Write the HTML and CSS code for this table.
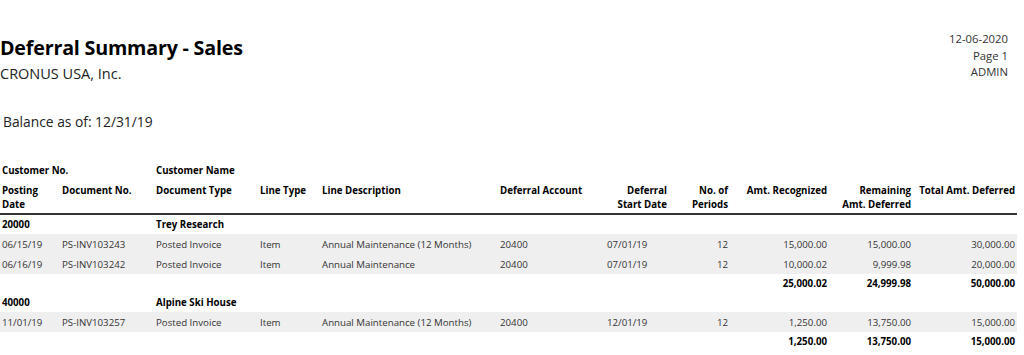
FILE: index.html
```html
<!DOCTYPE html>
<html>
<head>
<meta charset="utf-8">
<link rel="stylesheet" href="styles.css">
</head>
<body>
<div class="page">
  <header class="top">
    <div class="titles">
      <h1 class="title">Deferral Summary - Sales</h1>
      <div class="company">CRONUS USA, Inc.</div>
    </div>
    <div class="meta">
      <div>12-06-2020</div>
      <div>Page 1</div>
      <div>ADMIN</div>
    </div>
  </header>
  <div class="balance">Balance as of: 12/31/19</div>
  <table class="report">
    <colgroup>
      <col class="c1"><col class="c2"><col class="c3"><col class="c4"><col class="c5"><col class="c6"><col class="c7"><col class="c8"><col class="c9"><col class="c10"><col class="c11">
    </colgroup>
    <thead>
      <tr class="h1">
        <th colspan="2">Customer No.</th>
        <th colspan="9">Customer Name</th>
      </tr>
      <tr class="h2">
        <th>Posting<br>Date</th>
        <th>Document No.</th>
        <th>Document Type</th>
        <th>Line Type</th>
        <th>Line Description</th>
        <th>Deferral Account</th>
        <th class="r">Deferral<br>Start Date</th>
        <th class="r">No. of<br>Periods</th>
        <th class="r">Amt. Recognized</th>
        <th class="r">Remaining<br>Amt. Deferred</th>
        <th class="r">Total Amt. Deferred</th>
      </tr>
    </thead>
    <tbody>
      <tr class="group">
        <td colspan="2">20000</td>
        <td colspan="9">Trey Research</td>
      </tr>
      <tr class="line">
        <td>06/15/19</td><td>PS-INV103243</td><td>Posted Invoice</td><td>Item</td><td>Annual Maintenance (12 Months)</td><td>20400</td><td>07/01/19</td><td class="r">12</td><td class="r">15,000.00</td><td class="r">15,000.00</td><td class="r">30,000.00</td>
      </tr>
      <tr class="line">
        <td>06/16/19</td><td>PS-INV103242</td><td>Posted Invoice</td><td>Item</td><td>Annual Maintenance</td><td>20400</td><td>07/01/19</td><td class="r">12</td><td class="r">10,000.02</td><td class="r">9,999.98</td><td class="r">20,000.00</td>
      </tr>
      <tr class="total">
        <td colspan="8"></td><td class="r">25,000.02</td><td class="r">24,999.98</td><td class="r">50,000.00</td>
      </tr>
      <tr class="group">
        <td colspan="2">40000</td>
        <td colspan="9">Alpine Ski House</td>
      </tr>
      <tr class="line">
        <td>11/01/19</td><td>PS-INV103257</td><td>Posted Invoice</td><td>Item</td><td>Annual Maintenance (12 Months)</td><td>20400</td><td>12/01/19</td><td class="r">12</td><td class="r">1,250.00</td><td class="r">13,750.00</td><td class="r">15,000.00</td>
      </tr>
      <tr class="total">
        <td colspan="8"></td><td class="r">1,250.00</td><td class="r">13,750.00</td><td class="r">15,000.00</td>
      </tr>
    </tbody>
  </table>
</div>
</body>
</html>
```

FILE: styles.css
```css
html, body {
  margin: 0;
  padding: 0;
  background: #ffffff;
}
body {
  font-family: "Open Sans", "Noto Sans", "Liberation Sans", sans-serif;
  color: #333333;
}
.page {
  width: 1024px;
}
.top {
  display: flex;
  justify-content: space-between;
  align-items: flex-start;
  padding-top: 31px;
}
.title {
  margin: 4px 0 0 0;
  font-size: 19.7px;
  font-weight: 700;
  line-height: 26px;
  color: #000000;
  letter-spacing: -0.2px;
}
.company {
  font-size: 14.5px;
  line-height: 20px;
  color: #222222;
  margin-top: 3px;
}
.meta {
  text-align: right;
  font-size: 11.3px;
  line-height: 16.5px;
  color: #333333;
  padding-right: 16px;
}
.balance {
  font-size: 13.8px;
  line-height: 20px;
  color: #222222;
  padding-left: 3px;
  margin-top: 28px;
}
.report {
  margin-top: 29px;
  width: 1017px;
  border-collapse: collapse;
  table-layout: fixed;
  font-size: 9.7px;
}
.c1 { width: 60px; }
.c2 { width: 94px; }
.c3 { width: 104px; }
.c4 { width: 62px; }
.c5 { width: 178px; }
.c6 { width: 107px; }
.c7 { width: 64px; }
.c8 { width: 61px; }
.c9 { width: 99px; }
.c10 { width: 84px; }
.c11 { width: 104px; }
.report th,
.report td {
  padding: 0 2px;
  text-align: left;
  white-space: nowrap;
  overflow: visible;
}
.report th {
  font-weight: 700;
  color: #000000;
  vertical-align: top;
  line-height: 14px;
}
.report .r {
  text-align: right;
}
.h1 th {
  height: 20px;
  vertical-align: middle;
}
.h2 th {
  padding-top: 3px;
  padding-bottom: 1px;
  border-bottom: 2px solid #333333;
}
.group td {
  height: 19px;
  font-weight: 700;
  color: #000000;
  vertical-align: middle;
}
.line td {
  height: 20px;
  background: #efefef;
  vertical-align: middle;
}
.total td {
  height: 19px;
  font-weight: 700;
  color: #000000;
  vertical-align: middle;
}
```
